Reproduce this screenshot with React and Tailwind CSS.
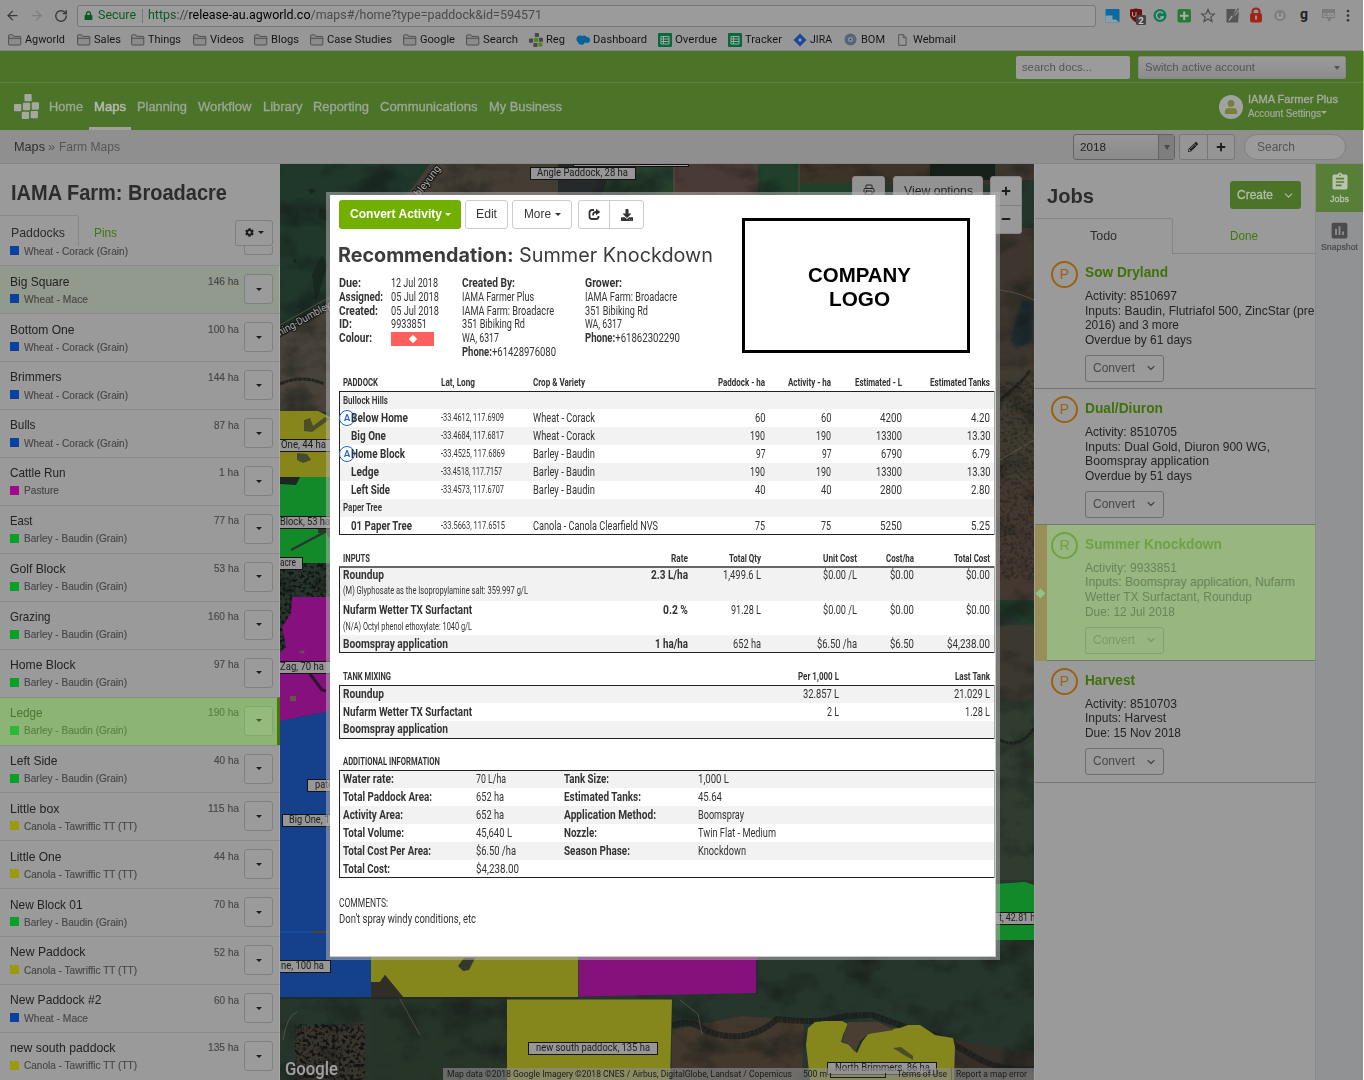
import React, { useLayoutEffect, useRef, useState } from "react";
import { FaCog, FaPencilAlt, FaPlus, FaMinus, FaDownload, FaLock, FaUser } from "react-icons/fa";
import { ArrowLeft, ArrowRight, RotateCw, ChevronDown, Printer } from "lucide-react";
import { MdAssignment, MdAssessment } from "react-icons/md";

/* Text squeezed or stretched horizontally to a given width. */
function Fit({ w, className = "", children }) {
  const ref = useRef(null);
  const [k, setK] = useState(1);
  useLayoutEffect(() => {
    const natural = parseFloat(getComputedStyle(ref.current).width);
    if (natural) setK(w / natural);
  }, [w, children]);
  return (
    <span className={"inline-block shrink-0 whitespace-nowrap " + className} style={{ width: w }}>
      <span ref={ref} className="inline-block origin-left" style={{ transform: `scaleX(${k})` }}>
        {children}
      </span>
    </span>
  );
}

function Caret({ className = "" }) {
  return <span className={"inline-block size-0 border-x-[3px] border-t-[3px] border-x-transparent " + className} />;
}

/* ---------- Browser chrome ---------- */

function FolderIcon() {
  return (
    <svg width="14" height="12" viewBox="0 0 14 12" fill="#8c8c8c" stroke="#505050" strokeWidth="1">
      <path d="M.6 10.2V1.6q0-.8.8-.8h3.2l1.2 1.6h6.2q.8 0 .8.8v7q0 .8-.8.8H1.4q-.8 0-.8-.8zM.6 4.3h12.2" />
    </svg>
  );
}

function AgLogo({ size, a, b }) {
  return (
    <svg width={size} height={size} viewBox="0 0 24 24" fill={a}>
      <rect x="10" y="0" width="7" height="7" rx="1" />
      <rect x="0" y="9.500" width="7" height="7" rx="1" />
      <rect x="8.500" y="8.500" width="7" height="7" rx="1" fill={b} />
      <rect x="17" y="8" width="7" height="7" rx="1" />
      <rect x="7.500" y="17" width="7" height="7" rx="1" />
      <rect x="16" y="16.300" width="7" height="7" rx="1" fill={b} />
    </svg>
  );
}

function BookmarkIcon({ kind }) {
  if (kind === "folder") return <FolderIcon />;
  if (kind === "ag") return <AgLogo size={14} a="#484848" b="#4c8a10" />;
  if (kind === "cloud")
    return (
      <svg width="14" height="10" viewBox="0 0 14 10" fill="#04639a">
        <circle cx="4" cy="4" r="3.500" /><circle cx="8" cy="3.500" r="3" /><circle cx="11" cy="5" r="3" /><circle cx="5.500" cy="6.500" r="3.300" />
      </svg>
    );
  if (kind === "sheet")
    return (
      <svg width="14" height="14" viewBox="0 0 14 14">
        <rect width="14" height="14" rx="1" fill="#09693e" />
        <path d="M3 3.500h8v7.500H3zM3 6h8M3 8.500h8M5.500 3.500V11" fill="none" stroke="#a0a8a0" />
      </svg>
    );
  if (kind === "jira")
    return (
      <svg width="14" height="14" viewBox="0 0 14 14">
        <path d="M7 .5 13.500 7 7 13.500.5 7z" fill="#164a9c" /><path d="M7 5 9 7 7 9 5 7z" fill="#9a9a9a" />
      </svg>
    );
  if (kind === "bom")
    return (
      <svg width="13" height="13" viewBox="0 0 13 13">
        <circle cx="6.500" cy="6.500" r="6" fill="#566679" /><circle cx="6.500" cy="6.500" r="2.500" fill="#8a94a0" /><circle cx="6.500" cy="6.500" r="1" fill="#3a4a5a" />
      </svg>
    );
  return (
    <svg className="ml-[2px]" width="9" height="12" viewBox="0 0 9 12" fill="none" stroke="#555">
      <path d="M.7.7h4.600l2.800 3v7.600H.7zM5.200.7v3h3" />
    </svg>
  );
}

const bookmarks = [
  ["Agworld", "folder", 69, 40], ["Sales", "folder", 54, 27], ["Things", "folder", 62, 33], ["Videos", "folder", 61, 34],
  ["Blogs", "folder", 56, 28], ["Case Studies", "folder", 93, 65], ["Google", "folder", 63, 35], ["Search", "folder", 63, 35],
  ["Reg", "ag", 47, 19], ["Dashboard", "cloud", 82, 54], ["Overdue", "sheet", 70, 42], ["Tracker", "sheet", 65, 37],
  ["JIRA", "jira", 51, 22], ["BOM", "bom", 52, 24], ["Webmail", "page", 60, 43],
];

function Extensions() {
  return (
    <svg className="shrink-0" width="246" height="24" viewBox="1104 4 246 24">
      <rect x="1105.500" y="9" width="14" height="13.500" rx="1" fill="#0b6a9e" />
      <path d="M1105.500 15.500h7v4h3.500l3.500 3h-14z" fill="#86a0ac" />
      <path d="M1130 9.500l6-1 6 1v6q-1 4-6 7-5-3-6-7z" fill="#6a120c" />
      <path d="M1132.500 12v3q0 1.500 1.700 1.500T1136 15v-3" fill="none" stroke="#aaa" />
      <rect x="1136" y="15" width="10" height="10" rx="1.500" fill="#444" />
      <text x="1138.300" y="23.500" fontSize="9.500" fontWeight="bold" fill="#ccc">2</text>
      <circle cx="1160" cy="15.500" r="6.500" fill="#0b7a55" />
      <path d="M1163 13.500a3.600 3.600 0 1 0 .3 3.500h-3" fill="none" stroke="#aaa" strokeWidth="1.300" />
      <rect x="1177.500" y="9" width="13.500" height="13.500" rx="2" fill="#2a7a31" />
      <path d="M1184.200 11.500v8.500M1180 15.800h8.500" stroke="#aab0aa" strokeWidth="2" />
      <path d="M1208 9.500l1.800 4.300 4.500.3-3.500 3 1.200 4.400-4-2.500-4 2.500 1.200-4.400-3.500-3 4.500-.3z" fill="none" stroke="#4e4e4e" strokeWidth="1.200" />
      <path d="M1226.500 9h9l-2 5.500 1.500 1.500 4-4.500-1 11h-11.500z" fill="#555" />
      <path d="M1238.500 8.500l-4.500 6.500-3 4" stroke="#666" strokeWidth="2" fill="none" />
      <path d="M1229 20.500l3-4.500" stroke="#aaa" strokeWidth="1.300" />
      <rect x="1250" y="13" width="12" height="9.500" rx="2.500" fill="#a12417" />
      <path d="M1252.500 14v-2.500a3.500 3 0 0 1 7 0V14" fill="none" stroke="#a12417" strokeWidth="2" />
      <path d="M1256 15.500v4" stroke="#999" strokeWidth="2" />
      <circle cx="1280" cy="15.500" r="5.800" fill="#808080" />
      <path d="M1277.800 13v3q0 2 2.200 2t2.200-2v-3" fill="none" stroke="#aaa" strokeWidth="1.300" />
      <text x="1300" y="19" fontSize="14" fontFamily="Roboto" fontWeight="bold" fill="#222">g</text>
      <path d="M1322 9h13v9h-3l-3 4-2-4h-5z" fill="#7b7b7b" />
      <text x="1323" y="16.500" fontSize="6" fontWeight="bold" fill="#a5a5a5">CSS</text>
      <circle cx="1348" cy="11" r="1.300" fill="#333" /><circle cx="1348" cy="15.600" r="1.300" fill="#333" /><circle cx="1348" cy="20.200" r="1.300" fill="#333" />
    </svg>
  );
}

function Browser() {
  return (
    <div className="h-[51px] bg-[#979797] font-['Roboto',sans-serif] text-[#151515] border-b border-[#858585]">
      <div className="flex h-[30px] items-center pt-px">
        <ArrowLeft className="ml-[5px] size-[15px] text-[#3a3a3a]" />
        <ArrowRight className="ml-[9px] size-[15px] text-[#7d7d7d]" />
        <RotateCw className="ml-[10px] size-[14px] text-[#3a3a3a]" strokeWidth={2.400} />
        <div className="ml-[9px] flex h-[22px] w-[1019px] items-center rounded-[3px] border border-[#777] bg-[#9b9b9b] pl-[6px] text-[12.500px]">
          <FaLock className="size-[9px] text-[#0b5c22]" />
          <Fit w={38} className="ml-[5px] text-[#0b5c22]">Secure</Fit>
          <span className="mx-[5.500px] h-[14px] w-px bg-[#777]" />
          <Fit w={394}>
            <span className="text-[#0b5c22]">https</span><span className="text-[#444]">://</span>
            <span className="text-black">release-au.agworld.co</span>
            <span className="text-[#4a4a4a]">/maps#/home?type=paddock&amp;id=594571</span>
          </Fit>
        </div>
        <span className="w-[8px]" />
        <Extensions />
      </div>
      <div className="flex h-[19px] items-center pl-2 text-[11.500px]">
        {bookmarks.map(([label, kind, w, tw]) => (
          <span key={label} className="flex shrink-0 items-center" style={{ width: w }}>
            <span className="flex w-[17px] shrink-0"><BookmarkIcon kind={kind} /></span>
            <Fit w={tw}>{label}</Fit>
          </span>
        ))}
      </div>
    </div>
  );
}

/* ---------- Application header ---------- */

const nav = [["Home", 34], ["Maps", 32], ["Planning", 50], ["Workflow", 53.5], ["Library", 39.5], ["Reporting", 56], ["Communications", 97.5], ["My Business", 73]];

function Header() {
  return (
    <header className="bg-[#4b7428]">
      <div className="flex h-[32px] items-center justify-end gap-2 border-b border-[#5a8039] pr-[17px] pt-px text-[11.500px] text-[#555]">
        <div className="flex h-[23px] w-[114px] items-center rounded-[2px] bg-[#9b9b9b] pl-[6px] pt-[2px]"><Fit w={70}>search docs...</Fit></div>
        <div className="flex h-[23px] w-[208px] items-center justify-between rounded-[2px] border border-[#888] bg-gradient-to-b from-[#9b9b9b] to-[#8c8c8c] pl-[6px] pr-[5px] pt-px">
          <Fit w={110}>Switch active account</Fit><Caret className="border-t-[4px] border-t-[#555]" />
        </div>
      </div>
      <div className="flex h-[47px] pl-[14px] pr-[25px]">
        <div className="mr-[10px] flex items-center"><AgLogo size={25} a="#a3a8a0" b="#a3a8a0" /></div>
        <nav className="flex gap-[11px] text-[13px]">
          {nav.map(([label, w]) => (
            <div key={label} className={label === "Maps" ? "-mx-[5px] flex items-center border-b-[3px] border-[#9fa39b] px-[5px] pt-[3px] text-[#b4b8b0] [-webkit-text-stroke:0.500px]" : "flex items-center text-[#9ba695] [-webkit-text-stroke:0.350px]"}>
              <Fit w={w}>{label}</Fit>
            </div>
          ))}
        </nav>
        <div className="ml-auto flex items-center gap-[5px] text-[#a5aca0]">
          <div className="flex size-[24px] items-center justify-center overflow-hidden rounded-full bg-[#a0a3a0]"><FaUser className="size-[14px] text-[#787f38]" /></div>
          <div className="-mt-[2px] flex flex-col leading-[14px]">
            <Fit w={90} className="text-[11.500px] [-webkit-text-stroke:0.350px]">IAMA Farmer Plus</Fit>
            <span className="flex items-center"><Fit w={73} className="text-[10.500px] [-webkit-text-stroke:0.200px]">Account Settings</Fit><Caret className="border-t-[#a5aca0]" /></span>
          </div>
        </div>
      </div>
    </header>
  );
}

function SubBar() {
  return (
    <div className="flex h-[34px] items-center border-b border-[#878787] bg-[#8f8f8f] pl-[14px] pr-[17px] pt-px text-[12.500px]">
      <Fit w={31} className="text-[#2e2e2e]">Maps</Fit>
      <Fit w={7} className="ml-[3px] text-[#555]">»</Fit>
      <Fit w={61} className="ml-[4px] text-[#555]">Farm Maps</Fit>
      <div className="ml-auto flex h-[26px] w-[102px] rounded-[3px] border border-[#646464] bg-gradient-to-b from-[#979797] to-[#8a8a8a] text-[11.500px] text-[#222]">
        <span className="flex flex-1 items-center pl-[6px] pt-px"><Fit w={26}>2018</Fit></span>
        <span className="flex w-[16px] items-center justify-center border-l border-[#646464] bg-[#7e7e7e]"><Caret className="border-t-[5px] border-t-[#4c4c4c]" /></span>
      </div>
      <div className="ml-1 flex h-[26px] w-[56px] rounded-[3px] border border-[#787878] bg-[#959595] text-[#1c1c1c]">
        <span className="flex flex-1 items-center justify-center border-r border-[#787878]"><FaPencilAlt className="size-[10px]" /></span>
        <span className="flex flex-1 items-center justify-center"><FaPlus className="size-[10px]" /></span>
      </div>
      <div className="ml-[9px] flex h-[26px] w-[102px] items-center rounded-full border border-[#828282] bg-[#9b9b9b] pl-[12px] text-[#555]"><Fit w={38}>Search</Fit></div>
    </div>
  );
}

/* ---------- Paddock list ---------- */

const B = "#0a41a0", G = "#06a128", Y = "#9a9b0b", M = "#a2088f";
const paddocks = [
  ["Big Square", 60, "Wheat - Mace", 64, "146 ha", 31, B], ["Bottom One", 65, "Wheat - Corack (Grain)", 104, "100 ha", 31, B],
  ["Brimmers", 52, "Wheat - Corack (Grain)", 104, "144 ha", 31, B], ["Bulls", 26, "Wheat - Corack (Grain)", 104, "87 ha", 25, B],
  ["Cattle Run", 56, "Pasture", 35, "1 ha", 20, M], ["East", 23, "Barley - Baudin (Grain)", 103, "77 ha", 25, G],
  ["Golf Block", 56, "Barley - Baudin (Grain)", 103, "53 ha", 25, G], ["Grazing", 41, "Barley - Baudin (Grain)", 103, "160 ha", 31, G],
  ["Home Block", 66, "Barley - Baudin (Grain)", 103, "97 ha", 25, G], ["Ledge", 33, "Barley - Baudin (Grain)", 103, "190 ha", 31, "#2cb838"],
  ["Left Side", 48, "Barley - Baudin (Grain)", 103, "40 ha", 25, G], ["Little box", 50, "Canola - Tawriffic TT (TT)", 113, "115 ha", 31, Y],
  ["Little One", 52, "Canola - Tawriffic TT (TT)", 113, "44 ha", 25, Y], ["New Block 01", 73, "Barley - Baudin (Grain)", 103, "70 ha", 25, G],
  ["New Paddock", 76, "Canola - Tawriffic TT (TT)", 113, "52 ha", 25, Y], ["New Paddock #2", 92, "Wheat - Mace", 64, "60 ha", 25, B],
  ["new south paddock", 106, "Canola - Tawriffic TT (TT)", 113, "135 ha", 31, Y],
];

function PaddockRow({ p }) {
  const [name, nw, crop, cw, ha, hw, color] = p;
  const on = name === "Ledge";
  const bg = on ? "bg-[#8cb475] border-r-[3px] border-r-[#457a08]" : name === "Big Square" ? "bg-[#919a8c] border-r border-r-[#a8a8a8]" : "border-r border-r-[#a8a8a8]";
  return (
    <div className={"flex h-[47.930px] shrink-0 border-t border-t-[#8b8b8b] pl-[10px] " + bg}>
      <div className={"flex flex-1 flex-col pt-[6.500px] " + (on ? "text-[#4d7430]" : "text-[#222]")}>
        <span className="flex h-[17px] items-center text-[13px]"><Fit w={nw - 0.5}>{name}</Fit></span>
        <span className={"flex h-[18px] items-center text-[10.800px] [-webkit-text-stroke:0.150px] " + (on ? "text-[#5c8046]" : "text-[#474747]")}>
          <span className="mr-[5px] size-[9px]" style={{ background: color }} /><Fit w={cw}>{crop}</Fit>
        </span>
      </div>
      <span className={"flex h-[29px] items-center text-[10.800px] [-webkit-text-stroke:0.150px] " + (on ? "text-[#5c8046]" : "text-[#474747]")}><Fit w={hw}>{ha}</Fit></span>
      <span className={"ml-[5px] mt-[8px] flex h-[30px] w-[29px] items-center justify-center rounded-[3px] border " + (on ? "mr-[4px] border-[#83a86f] bg-[#94ba7e]" : "mr-[6px] border-[#808080] bg-[#9b9b9b]")}>
        <Caret className={on ? "border-t-[#3d5f26]" : "border-t-[#1c1c1c]"} />
      </span>
    </div>
  );
}

function Sidebar() {
  return (
    <aside className="flex w-[280px] shrink-0 flex-col overflow-hidden bg-[#9a9a9a]">
      <div className="flex h-[52px] items-center pl-[11px] pt-[7px] text-[21.500px] font-bold text-[#2c2c2c]"><Fit w={216}>IAMA Farm: Broadacre</Fit></div>
      <div className="flex h-[31px] text-[13px]">
        <div className="flex w-[79px] items-center rounded-tr-[3px] border-r border-t border-[#888] pl-[11px] pt-[5px] text-[#2c2c2c]"><Fit w={54}>Paddocks</Fit></div>
        <div className="flex items-center pl-[15px] pt-[6px] text-[#3c7a0c]"><Fit w={23}>Pins</Fit></div>
        <div className="relative z-10 ml-auto mr-[7px] mt-[5px] flex h-[26px] w-[38px] items-center justify-center gap-[4px] rounded-[3px] border border-[#7e7e7e] bg-[#9a9a9a] text-[#1c1c1c]"><FaCog className="size-[9px]" /><Caret className="border-t-[#1c1c1c]" /></div>
      </div>
      <div className="flex h-[19.600px] shrink-0 items-start pl-[10px] text-[10.800px] text-[#474747] [-webkit-text-stroke:0.150px]">
        <span className="mr-[5px] size-[9px] bg-[#0a41a0]" /><Fit w={104} className="-mt-[3px]">Wheat - Corack (Grain)</Fit>
        <span className="ml-auto mr-[7px] h-[9px] w-[29px] rounded-b-[3px] border border-t-0 border-[#808080]" />
      </div>
      {paddocks.map((p) => <PaddockRow key={p[0]} p={p} />)}
    </aside>
  );
}

/* ---------- Map ---------- */

function MapLabel({ className, w, children }) {
  return <div className={"absolute flex h-[13px] items-center border border-[#141414] bg-[#979797] text-[10.500px] leading-none text-[#1a1a1a] " + className}><Fit w={w}>{children}</Fit></div>;
}

function MapArt() {
  return (
    <svg className="block" width="754" height="916" viewBox="280 164 754 916">
      <defs>
        <filter id="grain" x="0" y="0" width="100%" height="100%" colorInterpolationFilters="sRGB">
          <feTurbulence type="fractalNoise" baseFrequency="0.025 0.035" numOctaves="6" seed="8" />
          <feColorMatrix values="0 0 0 0 0.070  0 0 0 0 0.090  0 0 0 0 0.080  3 0 0 0 -1.450" />
        </filter>
        <filter id="speck" x="0" y="0" width="100%" height="100%" colorInterpolationFilters="sRGB">
          <feTurbulence type="fractalNoise" baseFrequency="0.280" numOctaves="3" seed="3" />
          <feColorMatrix values="0 0 0 0 0.070  0 0 0 0 0.080  0 0 0 0 0.080  0 5 0 0 -2.300" />
        </filter>
        <filter id="soft"><feGaussianBlur stdDeviation="1.500" /></filter>
      </defs>
      <rect x="280" y="164" width="754" height="916" fill="#27362c" />
      <path d="M280 164h150l-100 140-50 30z" fill="#20382c" />
      <path d="M280 336l60-34v110h-60z" fill="#48423a" />
      <path d="M430 164h80l-12 32h-92zM500 164h60v32h-72z" fill="#443d34" />
      <path d="M558 164h54v32h-54z" fill="#25292a" />
      <path d="M612 164h62v32h-72z" fill="#26402e" />
      <path d="M674 164h84v32h-84z" fill="#4a3a36" />
      <path d="M758 164h40v32h-40z" fill="#20402b" />
      <path d="M800 164h200v20h-200z" fill="#3c3429" />
      <path d="M800 183h60v13h-60z" fill="#204029" />
      <path d="M930 164h85v16h-85z" fill="#17211b" />
      <path d="M995 164h39v416h-39z" fill="#3d362e" />
      <path d="M995 180h39v48h-39z" fill="#26352b" />
      <path d="M995 366h39v120h-39z" fill="#403b31" />
      <path d="M995 480h39v120h-39z" fill="#453831" />
      <path d="M995 600h39v26l-39-16z" fill="#203c28" />
      <path d="M995 626l39-2v76h-39z" fill="#3b382f" />
      <path d="M995 700h39v180h-39z" fill="#303c2f" />
      <path d="M1022 300l-12 40 6 8 16-6 2-40z" fill="#1a292d" filter="url(#soft)" />
      <path d="M672 1030l70-14 62 5-2 60H672z" fill="#42382e" />
      <path d="M955 1040l79 14v26h-79z" fill="#352f28" />
      <path d="M371 998h136v82H371z" fill="#273529" />
      <path d="M295 1028l70-6-1 58h-66z" fill="#39342c" />
      <rect x="280" y="164" width="754" height="916" filter="url(#grain)" opacity=".5" />
      <g filter="url(#speck)">
        <rect x="295" y="1024" width="70" height="56" />
      </g>
      <g filter="url(#speck)">
        <rect x="280" y="560" width="50" height="90" />
      </g>
      <g filter="url(#speck)" opacity=".35">
        <rect x="998" y="380" width="36" height="200" />
      </g>
      <g fill="none" stroke="#1a1d1b" strokeWidth="6" opacity=".8" strokeDasharray="5 .5 3 .5">
        <path d="M672 1026q18-8 35 5 40 15 70-12 40 4 55 0t40-4q50 18 60 20t40 20 62 14" />
        <path d="M280 384q22-10 44 0M1000 400q25-20 30-30M1000 740q20 10 34-12" strokeWidth="3" />
      </g>
      <g fill="none" stroke="#6a5c49" strokeWidth="1" opacity=".7">
        <path d="M280 325l50-28M674 164v30M799 164v30M680 1000l18 14 4 20M1000 290q20 3 34 10M1000 460l34-20M283 1040q4-25 14-28M395 990l25 45" />
      </g>
      <path d="M320 208l8 2v12l-9-4zM308 190l4-2 4 3-5 3zM293 258l3 1v4l-3-1zM312 275l10-20 6 10-12 36z" fill="#15221b" opacity=".7" />

      <path d="M280 411h38l12 6v60h-50z" fill="#87861a" />
      <path d="M304 420l6-2 3 8 12-9 5 2-18 13-8-1z" fill="#4c4e2a" />
      <path d="M297 453l10 1 4 6-8 3-6-3z" fill="#454a30" />
      <path d="M280 477h50v86h-50z" fill="#138a29" />
      <path d="M280 477h20l-4 8-16-1z" fill="#1c2622" />
      <path d="M291 550l34-18" stroke="#27392a" strokeWidth="2.500" fill="none" />
      <path d="M318 531h10l2 6" stroke="#27392a" strokeWidth="4" fill="none" />
      <path d="M292 597h38v114l-50 10v-68l6-6-4-20 9-14z" fill="#86107d" />
      <path d="M310 674l12 16 4 1" stroke="#301430" strokeWidth="3" fill="none" />
      <path d="M298 652l7-2-2 4zM290 696h6v5h-6z" fill="#605848" />
      <path d="M280 721l50-10 41 249v37.500h-91z" fill="#15418c" />
      <path d="M280 932h50" stroke="#1c50a4" />
      <path d="M312 932h18" stroke="#4a4433" strokeWidth="2" />
      <path d="M371 950h207.500v47H403l-18-22-5 7h-9z" fill="#85861c" />
      <path d="M458 966l6-8h11l-6 12-6 1z" fill="#343a29" />
      <path d="M371 982h9l5-7 18 22h-32z" fill="#302e27" />
      <path d="M578.500 950H757v43l-178.500 3.500z" fill="#85127c" />
      <path d="M578.500 950v47" stroke="#303f1f" />
      <path d="M507 999.500h165l-2 80.500H507z" fill="#85861c" />
      <path d="M810 1080l-4-35 2-17 7-6 10-1h17l6 3-5 11-2 7 9 3 7 8 5-11 6-8 14-4 18-2 8-3h12l15 10 18 3 2 9-1 33z" fill="#85861c" />
      <path d="M848 1022l30 0 16 8-26 4-8 7-5 11-7-8-6-3z" fill="#4a3d31" />
      <path d="M893 1048l8-1 12 9v4l-9-5z" fill="#4b4c2b" />
      <path d="M995 884l30-2 9 3v55h-39z" fill="#138a29" />
      <path d="M280 998h227M757 960v34" stroke="#1f2a20" strokeWidth="1.500" fill="none" />
      <g fontFamily="Roboto" fontSize="10.500" fill="#aaa" stroke="#111" strokeWidth="2" paintOrder="stroke">
        <text transform="translate(280 336) rotate(-29)" textLength="64" lengthAdjust="spacingAndGlyphs">ning-Dumbleyu</text>
        <text transform="translate(419 197) rotate(-52)" textLength="36" lengthAdjust="spacingAndGlyphs">bleyung</text>
      </g>
    </svg>
  );
}

function MapPanel() {
  return (
    <section className="relative w-[754px] shrink-0 overflow-hidden font-['Roboto',sans-serif]">
      <MapArt />
      <div className="absolute left-[293px] top-0 h-[3px] w-[116px] border border-[#141414] bg-[#979797]" />
      <MapLabel className="left-[250px] top-[3px] w-[106px] pl-[6px]" w={91}>Angle Paddock, 28 ha</MapLabel>
      <MapLabel className="-left-px top-[275px] w-[60px] pl-[1px]" w={45}>One, 44 ha</MapLabel>
      <MapLabel className="-left-px top-[352px] w-[60px]" w={50}>Block, 53 ha</MapLabel>
      <MapLabel className="-left-px top-[393px] w-[24px]" w={16}>acre</MapLabel>
      <MapLabel className="-left-px top-[497px] w-[60px]" w={44}>Zag, 70 ha</MapLabel>
      <MapLabel className="left-[27px] top-[615px] w-[60px] pl-[7px]" w={18}>patc</MapLabel>
      <MapLabel className="left-[2px] top-[650px] w-[80px] pl-[6px]" w={41}>Big One, 1</MapLabel>
      <MapLabel className="-left-px top-[796px] w-[52px] pl-[1px]" w={43}>ne, 100 ha</MapLabel>
      <MapLabel className="left-[248px] top-[878px] w-[130px] pl-[7px]" w={114}>new south paddock, 135 ha</MapLabel>
      <MapLabel className="left-[547px] top-[898px] w-[110px] pl-[7px]" w={95}>North Brimmers, 86 ha</MapLabel>
      <MapLabel className="left-[714px] top-[748px] w-[60px] pl-[4px]" w={41}>t, 42.81 ha</MapLabel>
      <div className="absolute left-[572px] top-[12px] flex h-[28px] w-[33px] items-center justify-center rounded-[3px] border border-[#8a8a8a] bg-[#939393] text-[#222]"><Printer className="size-[12px]" /></div>
      <div className="absolute left-[613px] top-[12px] flex h-[30px] w-[90px] items-center justify-center rounded-[3px] border border-[#8a8a8a] bg-[#939393] font-['Liberation_Sans'] text-[12.500px] text-[#222]"><Fit w={69}>View options</Fit></div>
      <div className="absolute left-[710px] top-[12px] flex h-[58px] w-[32px] flex-col rounded-[3px] border border-[#858585] bg-[#999] text-[#1c1c1c]">
        <span className="flex flex-1 items-center justify-center border-b border-[#808080]"><FaPlus className="size-[10px]" /></span>
        <span className="flex flex-1 items-center justify-center"><FaMinus className="size-[10px]" /></span>
      </div>
      <div className="absolute bottom-0 left-[5px] text-[17.500px] font-medium leading-[22px] text-[#a2a2a2] [text-shadow:0_0_2px_#333]"><Fit w={53}>Google</Fit></div>
      <div className="absolute bottom-0 right-0 flex h-[12px] w-[591px] items-center bg-[#8e8e8ea0] pl-[4px] text-[9.800px] leading-none text-[#1a1a1a]">
        <Fit w={345}>Map data ©2018 Google Imagery ©2018 CNES / Airbus, DigitalGlobe, Landsat / Copernicus</Fit>
        <span className="mx-[5px] h-full w-px bg-[#6c6c6c]" />
        <Fit w={24}>500 m</Fit>
        <span className="ml-[3px] mt-[3px] h-[5px] w-[56px] border border-t-0 border-[#1c1c1c]" />
        <Fit w={50} className="ml-[11px]">Terms of Use</Fit>
        <span className="mx-[4px] h-full w-px bg-[#6c6c6c]" />
        <Fit w={71}>Report a map error</Fit>
      </div>
    </section>
  );
}

/* ---------- Jobs ---------- */

const jobs = [
  ["P", "Sow Dryland", 83, [["Activity: 8510697", 92], ["Inputs: Baudin, Flutriafol 500, ZincStar (pre", 229.5], ["2016) and 3 more", 94], ["Overdue by 61 days", 107]]],
  ["P", "Dual/Diuron", 78, [["Activity: 8510705", 92], ["Inputs: Dual Gold, Diuron 900 WG,", 185], ["Boomspray application", 124], ["Overdue by 51 days", 107]]],
  ["R", "Summer Knockdown", 137, [["Activity: 9933851", 92], ["Inputs: Boomspray application, Nufarm", 210], ["Wetter TX Surfactant, Roundup", 167], ["Due: 12 Jul 2018", 90]]],
  ["P", "Harvest", 50, [["Activity: 8510703", 92], ["Inputs: Harvest", 81], ["Due: 15 Nov 2018", 96]]],
];

function Job({ job }) {
  const [kind, title, tw, lines] = job;
  const on = kind === "R";
  return (
    <div className={"flex border-b border-[#757575] pb-[6.500px] " + (on ? "bg-[#97b680]" : "")}>
      <div className={"-mb-[7px] flex w-[13px] shrink-0 items-center justify-center " + (on ? "bg-[#988f58]" : "")}>
        {on && <span className="size-[7px] rotate-45 bg-[#8fc487]" />}
      </div>
      <div className={"ml-[4px] mt-[7px] flex size-[27px] shrink-0 items-center justify-center rounded-full border-2 text-[14px] " + (on ? "border-[#70a145] text-[#70a145]" : "border-[#9a6210] text-[#9a6210]")}>{kind}</div>
      <div className="ml-[7px] pt-[9px]">
        <div className={"flex h-[20px] items-center text-[14px] font-bold " + (on ? "text-[#70a145]" : "text-[#3f7208]")}><Fit w={tw}>{title}</Fit></div>
        <div className={"mt-[6.500px] flex flex-col text-[12.200px] leading-[14.600px] " + (on ? "text-[#698557]" : "text-[#242424]")}>
          {lines.map(([t, w]) => <Fit key={t} w={w}>{t}</Fit>)}
        </div>
        <div className={"mt-[7.500px] flex h-[27px] w-[79px] items-center justify-between rounded-[3px] border pl-[7px] pr-[6px] text-[12.200px] " + (on ? "border-[#83a070] text-[#7c9a69]" : "border-[#6e6e6e] text-[#484848]")}>
          <Fit w={42}>Convert</Fit><ChevronDown className="size-[12px]" strokeWidth={2.500} />
        </div>
      </div>
    </div>
  );
}

function Jobs() {
  return (
    <aside className="w-[281px] shrink-0 overflow-hidden border-l border-[#a3a3a3] bg-[#9a9a9a]">
      <div className="-ml-px">
        <div className="flex h-[54px] items-center justify-between pl-[13px] pr-[14px]">
          <Fit w={47} className="mt-[10px] text-[21px] font-bold text-[#2c2c2c]">Jobs</Fit>
          <div className="mt-[8px] flex h-[28px] w-[71px] items-center justify-between rounded-[3px] bg-[#4b7428] pl-[7px] pr-[6px] text-[#b3bfa9]"><Fit w={36} className="text-[12px] [-webkit-text-stroke:0.300px]">Create</Fit><ChevronDown className="size-[13px]" /></div>
        </div>
        <div className="flex h-[35.600px] text-[13px]">
          <div className="flex w-[139px] items-center justify-center rounded-t-[3px] border-r border-t border-[#848484] pb-px text-[#2e2e2e]"><Fit w={27}>Todo</Fit></div>
          <div className="flex flex-1 items-center justify-center border-b border-[#848484] text-[#3c7a0c]"><Fit w={28}>Done</Fit></div>
        </div>
        {jobs.map((j) => <Job key={j[1]} job={j} />)}
      </div>
    </aside>
  );
}

function Rail() {
  return (
    <div className="flex w-[48px] shrink-0 flex-col border-l border-[#8a8a8a] bg-[#919293]">
      <div className="flex h-[48px] flex-col items-center bg-[#577f38] pt-[8px] text-[8.500px] text-[#b8c4ae]"><MdAssignment className="size-[20px]" /><Fit w={19} className="mt-px [-webkit-text-stroke:0.300px]">Jobs</Fit></div>
      <div className="flex h-[48px] flex-col items-center pt-[8px] text-[8.500px] text-[#4b4b4d]"><MdAssessment className="size-[21px]" /><Fit w={37} className="[-webkit-text-stroke:0.200px]">Snapshot</Fit></div>
    </div>
  );
}

/* ---------- Recommendation document ---------- */

const Cell = ({ w, right, className = "", children, tw }) => (
  <span className={"flex shrink-0 items-center " + (right ? "justify-end " : "") + className} style={{ width: w }}>
    {children != null && <Fit w={tw}>{children}</Fit>}
  </span>
);

const paddockRows = [
  ["Below Home", 57, "-33.4612, 117.6909", 63, "Wheat - Corack", 62, "60", 10.5, "4200", 22, "4.20", 19, true],
  ["Big One", 35, "-33.4684, 117.6817", 63, "Wheat - Corack", 62, "190", 15, "13300", 26, "13.30", 23.5],
  ["Home Block", 54, "-33.4525, 117.6869", 64, "Barley - Baudin", 62, "97", 9.5, "6790", 21, "6.79", 18, true],
  ["Ledge", 28, "-33.4518, 117.7157", 61, "Barley - Baudin", 62, "190", 15, "13300", 26, "13.30", 23.5],
  ["Left Side", 39, "-33.4573, 117.6707", 63, "Barley - Baudin", 62, "40", 10.5, "2800", 22, "2.80", 19],
  null,
  ["01 Paper Tree", 61, "-33.5663, 117.6515", 64, "Canola - Canola Clearfield NVS", 125, "75", 10, "5250", 22, "5.25", 19],
];

const GroupRow = ({ tw, className, children }) => <div className={"flex items-center bg-[#f2f2f2] pl-[3px] pt-px text-[11px] font-semibold " + className}><Fit w={tw}>{children}</Fit></div>;

function PaddockTable() {
  return (
    <div className="mt-[15px]">
      <div className="flex h-[16px] items-center pl-[4px] pt-px text-[11px] font-bold">
        <Cell w={98} tw={35}>PADDOCK</Cell><Cell w={92} tw={34}>Lat, Long</Cell><Cell w={132} tw={52}>Crop &amp; Variety</Cell>
        <Cell w={100} right tw={47}>Paddock - ha</Cell><Cell w={66} right tw={43}>Activity - ha</Cell><Cell w={71} right tw={47}>Estimated - L</Cell><Cell w={88} right tw={60}>Estimated Tanks</Cell>
      </div>
      <div className="h-[144px] border border-r-0 border-[#222] shadow-[1px_0_0_#aaa]">
        <GroupRow tw={45} className="h-[17px]">Bullock Hills</GroupRow>
        {paddockRows.map((r, i) => r === null ? <GroupRow key="g" tw={39} className="h-[18px]">Paper Tree</GroupRow> : (
          <div key={r[0]} className={"relative flex items-center pl-[11px] text-[12.800px] " + (i % 2 ? "h-[18px] bg-[#f2f2f2]" : i === 6 ? "h-[17px]" : "h-[18px]")}>
            {r[12] && <span className="absolute -left-[1px] top-[1px] flex size-[16px] items-center justify-center rounded-full border border-[#1763d8] bg-white text-[9.500px] font-semibold text-[#1763d8]">A</span>}
            <Cell w={90} tw={r[1]} className="relative font-bold">{r[0]}</Cell>
            <Cell w={92} tw={r[3]} className="text-[11.500px]">{r[2]}</Cell><Cell w={132} tw={r[5]}>{r[4]}</Cell>
            <Cell w={100} right tw={r[7]}>{r[6]}</Cell><Cell w={66} right tw={r[7]}>{r[6]}</Cell><Cell w={71} right tw={r[9]}>{r[8]}</Cell><Cell w={88} right tw={r[11]}>{r[10]}</Cell>
          </div>
        ))}
      </div>
    </div>
  );
}

const inputRows = [
  ["Roundup", 41, "2.3 L/ha", 37, "1,499.6 L", 38, "$0.00 /L", 34, "$0.00", 24, "$0.00", 24, "(M) Glyphosate as the Isopropylamine salt: 359.997 g/L", 185],
  ["Nufarm Wetter TX Surfactant", 129, "0.2 %", 25, "91.28 L", 30, "$0.00 /L", 34, "$0.00", 24, "$0.00", 24, "(N/A) Octyl phenol ethoxylate: 1040 g/L", 129],
  ["Boomspray application", 105, "1 ha/ha", 33, "652 ha", 28, "$6.50 /ha", 40, "$6.50", 24, "$4,238.00", 43],
];

function InputsTable() {
  return (
    <div className="mt-[16px]">
      <div className="flex h-[15px] items-center pl-[4px] pt-px text-[11px] font-bold">
        <Cell w={245} tw={27}>INPUTS</Cell><Cell w={99.500} right tw={17}>Rate</Cell><Cell w={73.500} right tw={32}>Total Qty</Cell>
        <Cell w={96} right tw={34}>Unit Cost</Cell><Cell w={57} right tw={28}>Cost/ha</Cell><Cell w={76} right tw={36}>Total Cost</Cell>
      </div>
      <div className="border border-r-0 border-t-2 border-[#222] border-t-[#666] shadow-[1px_0_0_#aaa]">
        {inputRows.map((r, i) => (
          <div key={r[0]} className={(i % 2 ? "" : "bg-[#f2f2f2] ") + "pl-[3px] text-[12.800px]"}>
            <div className={"flex items-center " + (i ? "h-[17px]" : "h-[14px]")}>
              <Cell w={245} tw={r[1]} className="font-bold">{r[0]}</Cell><Cell w={99.500} right tw={r[3]} className="font-bold">{r[2]}</Cell><Cell w={73.500} right tw={r[5]}>{r[4]}</Cell>
              <Cell w={96} right tw={r[7]}>{r[6]}</Cell><Cell w={57} right tw={r[9]}>{r[8]}</Cell><Cell w={76} right tw={r[11]}>{r[10]}</Cell>
            </div>
            {r[12] && <div className={"flex items-center text-[11px] " + (i ? "h-[17px] pt-px" : "h-[19px]")}><Fit w={r[13]}>{r[12]}</Fit></div>}
          </div>
        ))}
      </div>
    </div>
  );
}

const tankRows = [["Roundup", 41, "32.857 L", 36, "21.029 L", 36], ["Nufarm Wetter TX Surfactant", 129, "2 L", 12, "1.28 L", 25], ["Boomspray application", 105]];

function TankTable() {
  return (
    <div className="mt-[16px]">
      <div className="flex h-[16px] items-center pl-[4px] text-[11px] font-bold">
        <Cell w={396} tw={48}>TANK MIXING</Cell><Cell w={100} right tw={41}>Per 1,000 L</Cell><Cell w={151} right tw={35}>Last Tank</Cell>
      </div>
      <div className="h-[54px] border border-r-0 border-[#222] shadow-[1px_0_0_#aaa]">
        {tankRows.map((r, i) => (
          <div key={r[0]} className={(i % 2 ? "h-[18px] " : "h-[17px] bg-[#f2f2f2] ") + "flex items-center pb-px pl-[3px] text-[12.800px]"}>
            <Cell w={396} tw={r[1]} className="font-bold">{r[0]}</Cell>
            {r[2] && <><Cell w={100} right tw={r[3]}>{r[2]}</Cell><Cell w={151} right tw={r[5]}>{r[4]}</Cell></>}
          </div>
        ))}
      </div>
    </div>
  );
}

const infoRows = [
  ["Water rate:", 51, "70 L/ha", 30, "Tank Size:", 45, "1,000 L", 31],
  ["Total Paddock Area:", 89, "652 ha", 28, "Estimated Tanks:", 77, "45.64", 24],
  ["Activity Area:", 60, "652 ha", 28, "Application Method:", 92, "Boomspray", 46],
  ["Total Volume:", 61, "45,640 L", 36, "Nozzle:", 33, "Twin Flat - Medium", 78],
  ["Total Cost Per Area:", 88, "$6.50 /ha", 40, "Season Phase:", 66, "Knockdown", 48],
  ["Total Cost:", 47, "$4,238.00", 43],
];

function InfoTable() {
  return (
    <div className="mt-[15px]">
      <div className="flex h-[16px] items-center pl-[4px] pt-px text-[11px] font-bold"><Fit w={97}>ADDITIONAL INFORMATION</Fit></div>
      <div className="h-[108px] border border-r-0 border-[#222] shadow-[1px_0_0_#aaa]">
        {infoRows.map((r, i) => (
          <div key={r[0]} className={(i % 2 ? "" : "bg-[#f2f2f2] ") + (i === 0 ? "h-[17px] pb-px " : i === 5 ? "h-[17px] " : "h-[18px] ") + "flex items-center pl-[3px] text-[12.800px]"}>
            <Cell w={133} tw={r[1]} className="font-bold">{r[0]}</Cell><Cell w={88} tw={r[3]}>{r[2]}</Cell>
            {r[4] && <><Cell w={134} tw={r[5]} className="font-bold">{r[4]}</Cell><Cell w={100} tw={r[7]}>{r[6]}</Cell></>}
          </div>
        ))}
      </div>
    </div>
  );
}

const btn = "flex h-[29px] items-center justify-center rounded-[3px] border border-[#ccc] bg-white text-[#333]";

function Document() {
  return (
    <div className="absolute left-[326px] top-[192px] h-[768px] w-[674px] border-[4px] border-t-[3px] border-[#b4b4b488] bg-clip-padding">
      <div className="h-[762px] w-[666px] border-b border-r border-[#ccc] bg-white pl-[9px] pt-[5px] text-[#333]">
        <div className="flex">
          <div className="w-[403px]">
            <div className="flex gap-[4px] text-[12.500px]">
              <div className="flex h-[29px] w-[122px] items-center justify-center gap-[3px] rounded-[3px] bg-[#72b000] text-white"><Fit w={92} className="font-bold">Convert Activity</Fit><Caret className="border-t-white" /></div>
              <div className={btn + " w-[43px]"}><Fit w={21}>Edit</Fit></div>
              <div className={btn + " w-[60px] gap-[4px]"}><Fit w={27}>More</Fit><Caret className="border-t-[#333]" /></div>
              <div className={btn + " ml-[2px] w-[66px]"}>
                <span className="flex h-full w-[31px] items-center justify-center border-r border-[#ccc]">
                  <svg width="13" height="13" viewBox="0 0 13 13" fill="none" stroke="#333" strokeWidth="1.800"><path d="M6 2H4Q1.500 2 1.500 4.500v4Q1.500 11 4 11h4q2.500 0 2.500-2.500V8" /><path d="M5 7.500Q5 4 8.500 4" /><path d="M8 .8 12.300 4 8 7.200z" fill="#333" stroke="none" /></svg>
                </span>
                <span className="flex h-full flex-1 items-center justify-center"><FaDownload className="size-[12px]" /></span>
              </div>
            </div>
            <div className="-ml-px mt-[12px] flex h-[28px] items-center font-['Inter',sans-serif] text-[20px] text-[#3c3c3c]"><Fit w={175.500} className="font-bold">Recommendation:</Fit><Fit w={194} className="ml-[5.500px]">Summer Knockdown</Fit></div>
          </div>
          <div className="mt-[18px] flex h-[135px] w-[228px] flex-col items-center justify-center border-[3px] border-black pl-[6px] pt-[2px] text-[20px] font-bold leading-[24px] text-black"><Fit w={103}>COMPANY</Fit><Fit w={61}>LOGO</Fit></div>
        </div>
        <div className="font-['Roboto',sans-serif]">
          <div className="-ml-[0.500px] -mt-[76px] flex h-[83px] text-[12.300px] leading-[13.750px]">
            <div className="flex w-[52.500px] flex-col font-bold"><Fit w={22}>Due:</Fit><Fit w={44}>Assigned:</Fit><Fit w={39}>Created:</Fit><Fit w={13}>ID:</Fit><Fit w={33}>Colour:</Fit></div>
            <div className="flex w-[70.500px] flex-col"><Fit w={47}>12 Jul 2018</Fit><Fit w={48}>05 Jul 2018</Fit><Fit w={48}>05 Jul 2018</Fit><Fit w={36}>9933851</Fit>
              <span className="flex h-[14px] w-[43px] items-center justify-center bg-[#ff5f5c]"><span className="size-[6px] rotate-45 bg-white" /></span></div>
            <div className="flex w-[123px] flex-col"><Fit w={53} className="font-bold">Created By:</Fit><Fit w={72}>IAMA Farmer Plus</Fit><Fit w={92}>IAMA Farm: Broadacre</Fit><Fit w={63}>351 Bibiking Rd</Fit><Fit w={37}>WA, 6317</Fit><Fit w={94}><b>Phone:</b>+61428976080</Fit></div>
            <div className="flex flex-col"><Fit w={37} className="font-bold">Grower:</Fit><Fit w={92}>IAMA Farm: Broadacre</Fit><Fit w={63}>351 Bibiking Rd</Fit><Fit w={37}>WA, 6317</Fit><Fit w={95}><b>Phone:</b>+61862302290</Fit></div>
          </div>
          <div className="w-[655px]">
            <PaddockTable />
            <InputsTable />
            <TankTable />
            <InfoTable />
            <div className="-ml-[0.500px] mt-[17px] flex flex-col leading-[16.300px]"><Fit w={49} className="text-[12.800px]">COMMENTS:</Fit><Fit w={137} className="text-[12.300px]">Don't spray windy conditions, etc</Fit></div>
          </div>
        </div>
      </div>
    </div>
  );
}

export default function App() {
  return (
    <div className="relative flex h-[1080px] w-[1364px] overflow-hidden bg-white font-['Liberation_Sans',Arial,sans-serif]">
      <div className="flex w-[1363px] flex-col">
        <Browser />
        <Header />
        <SubBar />
        <main className="flex min-h-0 flex-1">
          <Sidebar />
          <MapPanel />
          <Jobs />
          <Rail />
        </main>
      </div>
      <div className="flex w-px flex-col pt-[51px]"><span className="h-[79px] bg-[#7cc142]" /></div>
      <Document />
    </div>
  );
}
